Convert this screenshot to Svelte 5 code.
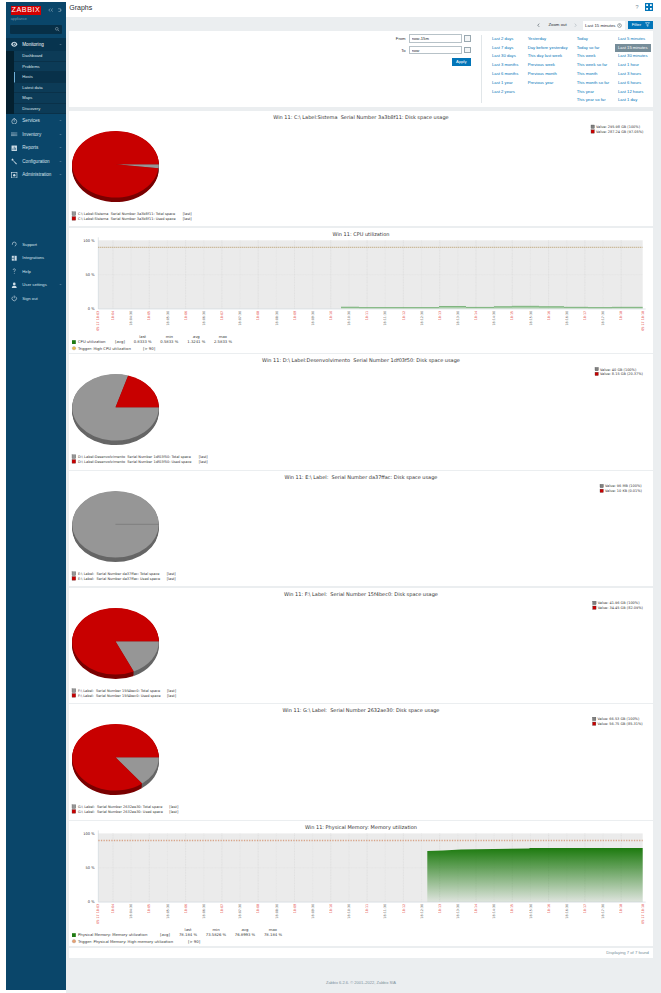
<script>
	// side menu
	const mainNav = [
		{ label: 'Services', icon: 'clock' },
		{ label: 'Inventory', icon: 'list' },
		{ label: 'Reports', icon: 'report' },
		{ label: 'Configuration', icon: 'wrench' },
		{ label: 'Administration', icon: 'admin' }
	];
	const subNav = ['Dashboard', 'Problems', 'Hosts', 'Latest data', 'Maps', 'Discovery'];
	const lowerNav = [
		{ label: 'Support', icon: 'support' },
		{ label: 'Integrations', icon: 'integrations' },
		{ label: 'Help', icon: 'help' },
		{ label: 'User settings', icon: 'user', arrow: true },
		{ label: 'Sign out', icon: 'power' }
	];

	// time selector
	const ranges = [
		['Last 2 days', 'Last 7 days', 'Last 30 days', 'Last 3 months', 'Last 6 months', 'Last 1 year', 'Last 2 years'],
		['Yesterday', 'Day before yesterday', 'This day last week', 'Previous week', 'Previous month', 'Previous year'],
		['Today', 'Today so far', 'This week', 'This week so far', 'This month', 'This month so far', 'This year', 'This year so far'],
		['Last 5 minutes', 'Last 15 minutes', 'Last 30 minutes', 'Last 1 hour', 'Last 3 hours', 'Last 6 hours', 'Last 12 hours', 'Last 1 day']
	];

	// pie graphs, sector angles in degrees from the right, clockwise
	const RED = ['#c80000', '#7a0000'];
	const GRAY = ['#969696', '#666666'];
	const pies = {
		c: {
			title: 'Win 11: C:\\ Label:Sistema  Serial Number 3a3b8f11: Disk space usage',
			name: 'C:\\ Label:Sistema  Serial Number 3a3b8f11:',
			lastX: 113.7,
			sectors: [[0, 7, GRAY], [7, 360, RED]],
			values: ['Value: 295.98 GB (100%)', 'Value: 287.24 GB (97.05%)'],
			valueX: 522,
			valueY: 16
		},
		d: {
			title: 'Win 11: D:\\ Label:Desenvolvimento  Serial Number 1df03f50: Disk space usage',
			name: 'D:\\ Label:Desenvolvimento  Serial Number 1df03f50:',
			lastX: 129.7,
			sectors: [[0, 287, GRAY], [287, 360, RED]],
			values: ['Value: 40 GB (100%)', 'Value: 8.15 GB (20.37%)'],
			valueX: 526,
			valueY: 15.4
		},
		e: {
			title: 'Win 11: E:\\ Label:  Serial Number da37ffac: Disk space usage',
			name: 'E:\\ Label:  Serial Number da37ffac:',
			lastX: 97.7,
			sectors: [[0, 360, GRAY]],
			seam: true,
			values: ['Value: 96 MB (100%)', 'Value: 10 KB (0.01%)'],
			valueX: 531,
			valueY: 15.3
		},
		f: {
			title: 'Win 11: F:\\ Label:  Serial Number 15f4bec0: Disk space usage',
			name: 'F:\\ Label:  Serial Number 15f4bec0:',
			lastX: 98,
			sectors: [[0, 65, GRAY], [65, 360, RED]],
			values: ['Value: 41.96 GB (100%)', 'Value: 34.45 GB (82.09%)'],
			valueX: 523.7,
			valueY: 15.2
		},
		g: {
			title: 'Win 11: G:\\ Label:  Serial Number 2632ae30: Disk space usage',
			name: 'G:\\ Label:  Serial Number 2632ae30:',
			lastX: 100.3,
			sectors: [[0, 52, GRAY], [52, 360, RED]],
			values: ['Value: 66.53 GB (100%)', 'Value: 56.75 GB (85.31%)'],
			valueX: 523.5,
			valueY: 15.2
		}
	};

	const CX = 46.5;
	const CY = 53.3;
	const RX = 43.3;
	const RY = 33.3;
	const depthLayers = [4.5, 3.5, 2.5, 1.5, 0.5];

	function sectorPath(from, to, dy = 0) {
		const y = CY + dy;
		if (to - from >= 360) {
			return `M${CX - RX} ${y}A${RX} ${RY} 0 1 0 ${CX + RX} ${y}A${RX} ${RY} 0 1 0 ${CX - RX} ${y}Z`;
		}
		const a = (from * Math.PI) / 180;
		const b = (to * Math.PI) / 180;
		const large = to - from > 180 ? 1 : 0;
		return `M${CX} ${y}L${CX + RX * Math.cos(a)} ${y + RY * Math.sin(a)}A${RX} ${RY} 0 ${large} 1 ${CX + RX * Math.cos(b)} ${y + RY * Math.sin(b)}Z`;
	}

	// line graphs
	const PLOT_X = 29.3;
	const PLOT_W = 544.4;
	const STEP = 18.15;
	const FIRST = 44;
	const ticks = Array.from({ length: 29 }, (_, i) => {
		const minute = 4 + Math.floor(i / 2);
		const label = `18:${String(minute).padStart(2, '0')}${i % 2 ? ':30' : ''}`;
		return { x: FIRST + i * STEP, label, major: i % 2 === 0 };
	});

	const cpuSteps = [
		[272, 290, 79.2], [290, 370, 79.6], [370, 397, 78.5], [397, 425, 79.4], [425, 443, 78.7],
		[443, 470, 78.3], [470, 495, 78.7], [495, 519, 79.3], [519, 543, 79.6], [543, 573.7, 79.3]
	];
	const memPoints = '358.3,81 358.3,30 374,29.6 392,28.4 460,27.6 461,26.9 573.7,27 573.7,81';
</script>

{#snippet icon(name)}
	<svg class="nav-icon" viewBox="0 0 12 12" aria-hidden="true">
		{#if name === 'eye'}
			<path d="M0 6c2-3.4 4-4.6 6-4.6S10 2.600 12 6c-2 3.400-4 4.600-6 4.600S2 9.400 0 6z" fill="currentColor" />
			<circle cx="6" cy="6" r="2.600" fill="#07344f" />
			<circle cx="6" cy="6" r="1.300" fill="currentColor" />
		{:else if name === 'clock'}
			<circle cx="6" cy="6.500" r="4.500" class="line" />
			<path d="M6 4v2.800M4.500 .8h3" class="line" />
		{:else if name === 'list'}
			<path d="M0 3.500h12M0 6h12M0 8.500h12" class="line dotted" />
		{:else if name === 'report'}
			<rect x="1" y="1" width="10" height="10" fill="currentColor" />
			<path d="M3.500 9V6.500M6 9V3M8.500 9V5" class="line cut" />
		{:else if name === 'wrench'}
			<path d="M1 2.500 3 .8l1.600 1.800-.6 1.600 7 6.200-1.400 1.400-6.400-7-1.600.4z" fill="currentColor" />
		{:else if name === 'admin'}
			<rect x="1" y="1" width="10" height="10" class="line" />
			<circle cx="6" cy="6" r="2.200" fill="currentColor" />
		{:else if name === 'support'}
			<path d="M2.500 7V5.500a3.500 3.500 0 0 1 7 0V7" class="line" />
			<path d="M9.500 7.500 7 9.500" class="line" />
		{:else if name === 'integrations'}
			<rect x="1.500" y="1.500" width="9" height="9" fill="currentColor" />
			<path d="M6 1.500v9M1.500 6h4.500" class="line cut" />
		{:else if name === 'help'}
			<path d="M4 3.500a2 2 0 1 1 3 1.700c-.8.500-1 .9-1 2" class="line" />
			<circle cx="6" cy="9.700" r=".8" fill="currentColor" />
		{:else if name === 'user'}
			<circle cx="6" cy="3.500" r="2.500" fill="currentColor" />
			<path d="M1.500 11c0-3 2-4 4.500-4s4.500 1 4.500 4z" fill="currentColor" />
		{:else if name === 'power'}
			<path d="M6 1v5M3.500 3a4.200 4.200 0 1 0 5 0" class="line" />
		{/if}
	</svg>
{/snippet}

{#snippet chevron()}
	<svg class="chevron" viewBox="0 0 6 6" aria-hidden="true"><path d="M1.500 2.200 3 3.800l1.500-1.600" /></svg>
{/snippet}

{#snippet pieCard(pie)}
	<section class="graph pie-graph">
		<svg class="canvas" viewBox="0 0 583.4 115.500" width="583.4" height="115.5">
			<text class="title" x="292" y="8">{pie.title}</text>
			{#each depthLayers as dy}
				{#each pie.sectors as s}
					<path d={sectorPath(s[0], s[1], dy)} fill={s[2][1]} />
				{/each}
			{/each}
			{#each pie.sectors as s}
				<path d={sectorPath(s[0], s[1])} fill={s[2][0]} />
			{/each}
			{#if pie.seam}
				<path d="M{CX} {CY}H{CX + RX}" class="seam" />
			{/if}

			<rect x="3" y="100.800" width="3.800" height="3.800" fill="#969696" stroke="#555" stroke-width=".3" />
			<rect x="3" y="105.500" width="3.800" height="3.800" fill="#c80000" stroke="#555" stroke-width=".3" />
			<text class="small" x="9" y="104">{pie.name} Total space</text>
			<text class="small" x="9" y="108.700">{pie.name} Used space</text>
			<text class="small" x={pie.lastX} y="104">[last]</text>
			<text class="small" x={pie.lastX} y="108.700">[last]</text>

			<rect x={pie.valueX} y={pie.valueY - 2} width="3.400" height="3.400" fill="#808080" stroke="#444" stroke-width=".3" />
			<rect x={pie.valueX} y={pie.valueY + 2.800} width="3.400" height="3.400" fill="#c80000" stroke="#444" stroke-width=".3" />
			<text class="small" x={pie.valueX + 5} y={pie.valueY + 1.200}>{pie.values[0]}</text>
			<text class="small" x={pie.valueX + 5} y={pie.valueY + 6}>{pie.values[1]}</text>
		</svg>
	</section>
{/snippet}

{#snippet plotFrame(top, triggerY, triggerClass)}
	<rect x={PLOT_X} y={top} width={PLOT_W} height="68.700" fill="#ebebeb" />
	{#each ticks as t}
		<path d="M{t.x} {top}v68.700" class={t.major ? 'grid major' : 'grid'} />
	{/each}
	<path d="M{PLOT_X} {top + 34.350}h{PLOT_W}" class="grid" />
	<path d="M{PLOT_X} {top - 3}V{top + 68.700}H{PLOT_X + PLOT_W + 3}" class="axis" />
	<path d="M{PLOT_X} {triggerY}h{PLOT_W}" class={triggerClass} />
	<text class="ylabel" x="25.600" y={top + 1.300}>100 %</text>
	<text class="ylabel" x="25.600" y={top + 35.600}>50 %</text>
	<text class="ylabel" x="25.600" y={top + 70}>0 %</text>
	{#each ticks as t}
		<text class={t.major ? 'tick red' : 'tick'} transform="translate({t.x + 1.200} {top + 70.500}) rotate(-90)">{t.label}</text>
	{/each}
	<text class="tick red" transform="translate({PLOT_X + 1.200} {top + 70.500}) rotate(-90)">05-17 18:03</text>
	<text class="tick red" transform="translate({PLOT_X + PLOT_W + 1.200} {top + 70.500}) rotate(-90)">05-17 18:18</text>
{/snippet}

{#snippet statRow(cols, heads, vals)}
	{#each cols as x, i}
		<text class="legend mid" {x} y="110.500">{heads[i]}</text>
		<text class="legend mid" {x} y="115.500">{vals[i]}</text>
	{/each}
{/snippet}

<div class="layout">
	<aside class="sidebar">
		<div class="brand">
			<div class="logo">ZABBIX</div>
			<div class="brand-tools">
				<svg viewBox="0 0 8 6" aria-hidden="true"><path d="M3.500 .8 1 3l2.500 2.200M7 .8 4.500 3 7 5.200" /></svg>
				<svg viewBox="0 0 8 6" aria-hidden="true"><path d="M1.500 1h3.500v4H2M5 3h2" /></svg>
			</div>
		</div>
		<div class="appliance">appliance</div>
		<div class="search">
			<svg viewBox="0 0 8 8" aria-hidden="true"><circle cx="3.200" cy="3.200" r="2.400" /><path d="m5 5 2.500 2.500" /></svg>
		</div>

		<nav class="nav">
			<div class="nav-row open">
				{@render icon('eye')}
				<span>Monitoring</span>
				{@render chevron()}
			</div>
			<div class="submenu">
				{#each subNav as item}
					<div class="sub-row" class:current={item === 'Hosts'}>{item}</div>
				{/each}
			</div>
			{#each mainNav as item}
				<div class="nav-row">
					{@render icon(item.icon)}
					<span>{item.label}</span>
					{@render chevron()}
				</div>
			{/each}
		</nav>

		<nav class="nav lower">
			{#each lowerNav as item}
				<div class="nav-row">
					{@render icon(item.icon)}
					<span>{item.label}</span>
					{#if item.arrow}{@render chevron()}{/if}
				</div>
			{/each}
		</nav>
	</aside>

	<main class="main">
		<header class="header">
			<h1>Graphs</h1>
			<div class="header-tools">
				<span class="help-mark">?</span>
				<span class="fullscreen">
					<svg viewBox="0 0 8 8" aria-hidden="true">
						<path d="M1.200 1.200h1.800v1.800H1.200zM5 1.200h1.800v1.800H5zM1.200 5h1.800v1.800H1.200zM5 5h1.800v1.800H5z" />
					</svg>
				</span>
			</div>
		</header>

		<div class="tabbar">
			<svg class="step" viewBox="0 0 4 6" aria-hidden="true"><path d="M3 .8 1 3l2 2.200" /></svg>
			<span class="zoom-out">Zoom out</span>
			<svg class="step faded" viewBox="0 0 4 6" aria-hidden="true"><path d="m1 .8 2 2.200-2 2.200" /></svg>
			<div class="time-tab">
				Last 15 minutes
				<svg viewBox="0 0 8 8" aria-hidden="true"><circle cx="4" cy="4" r="3" /><path d="M4 2.200V4l1.200.8" /></svg>
			</div>
			<div class="filter-btn">
				Filter
				<svg viewBox="0 0 8 8" aria-hidden="true"><path d="M.8 1h6.400L4.800 4v3L3.200 6V4z" /></svg>
			</div>
		</div>

		<section class="filter">
			<div class="form">
				<div class="form-row">
					<label for="from">From</label>
					<input id="from" value="now-15m" />
					<span class="calendar"></span>
				</div>
				<div class="form-row">
					<label for="to">To</label>
					<input id="to" value="now" />
					<span class="calendar"></span>
				</div>
				<button type="button" class="apply">Apply</button>
			</div>
			<div class="ranges">
				{#each ranges as col}
					<div class="range-col">
						{#each col as item}
							<span class="range" class:selected={item === 'Last 15 minutes'}>{item}</span>
						{/each}
					</div>
				{/each}
			</div>
		</section>

		{@render pieCard(pies.c)}

		<section class="graph line-graph">
			<svg class="canvas" viewBox="0 0 583.400 125" width="583.4" height="125">
				<text class="title" x="292" y="8">Win 11: CPU utilization</text>
				{@render plotFrame(12.3, 19.3, 'trigger')}
				{#each cpuSteps as s}
					<rect x={s[0]} y={s[2]} width={s[1] - s[0]} height={80.400 - s[2]} fill="#a9cfa9" />
					<path d="M{s[0]} {s[2]}H{s[1]}" class="cpu-line" />
				{/each}
				{@render statRow([73.7, 100.3, 127.3, 154], ['last', 'min', 'avg', 'max'], ['0.8333 %', '0.5833 %', '1.3241 %', '2.5833 %'])}
				<rect x="3" y="112.200" width="3.800" height="3.800" fill="#1f7a12" />
				<text class="legend" x="9" y="115.500">CPU utilization</text>
				<text class="legend" x="46" y="115.500">[avg]</text>
				<circle cx="5" cy="120.200" r="1.800" fill="#e8b84c" stroke="#999" stroke-width=".3" />
				<text class="legend" x="9" y="121.800">Trigger: High CPU utilization</text>
				<text class="legend" x="74" y="121.800">[&gt; 90]</text>
			</svg>
		</section>

		{@render pieCard(pies.d)}
		{@render pieCard(pies.e)}
		{@render pieCard(pies.f)}
		{@render pieCard(pies.g)}

		<section class="graph line-graph">
			<svg class="canvas" viewBox="0 0 583.400 125" width="583.4" height="125">
				<defs>
					<linearGradient id="mem-fill" x1="0" y1="0" x2="0" y2="1">
						<stop offset="0" stop-color="#1c7a0e" />
						<stop offset="1" stop-color="#1c7a0e" stop-opacity=".06" />
					</linearGradient>
				</defs>
				<text class="title" x="292" y="8">Win 11: Physical Memory: Memory utilization</text>
				{@render plotFrame(12.4, 19.4, 'trigger thick')}
				<polygon points={memPoints} fill="url(#mem-fill)" />
				{@render statRow([119, 147, 176, 204], ['last', 'min', 'avg', 'max'], ['78.184 %', '73.5826 %', '76.8993 %', '78.184 %'])}
				<rect x="3" y="112.200" width="3.800" height="3.800" fill="#1f7a12" />
				<text class="legend" x="9" y="115.500">Physical Memory: Memory utilization</text>
				<text class="legend" x="91" y="115.500">[avg]</text>
				<circle cx="5" cy="120.200" r="1.800" fill="#e8a070" stroke="#999" stroke-width=".3" />
				<text class="legend" x="9" y="121.800">Trigger: Physical Memory: High memory utilization</text>
				<text class="legend" x="119" y="121.800">[&gt; 90]</text>
			</svg>
		</section>

		<div class="paging">Displaying 7 of 7 found</div>

		<footer class="footer">Zabbix 6.2.6. © 2001–2022, Zabbix SIA</footer>
	</main>
</div>

<style>
	:global(body) {
		margin: 0;
		background: #fff;
		overflow: hidden;
	}

	.layout {
		display: flex;
		height: 993px;
		padding-left: 6px;
		box-sizing: border-box;
		font-family: 'Liberation Sans', Arial, sans-serif;
	}

	/* side menu */
	.sidebar {
		flex: 0 0 60px;
		height: 988px;
		margin-top: 2px;
		background: #0a466a;
		color: #d6e2ea;
	}

	.brand {
		display: flex;
		align-items: center;
		justify-content: space-between;
		padding: 4px 3.5px 0 4.7px;
	}

	.logo {
		width: 30.6px;
		height: 8.7px;
		background: #d40000;
		color: #fff;
		font-size: 7.2px;
		line-height: 8.9px;
		text-align: center;
		letter-spacing: 0.55px;
	}

	.brand-tools {
		display: flex;
		gap: 3.5px;
	}

	.brand-tools svg {
		width: 5.5px;
		height: 4.2px;
		fill: none;
		stroke: #9db6c6;
		stroke-width: 0.8;
	}

	.appliance {
		padding: 2px 0 0 4.7px;
		height: 6.500px;
		font-size: 3.800px;
		line-height: 5px;
		color: #6f97ae;
	}

	.search {
		display: flex;
		align-items: center;
		justify-content: flex-end;
		height: 8.700px;
		margin: 1.800px 4px 4px 4px;
		padding-right: 2.500px;
		border-radius: 1px;
		background: #072f47;
	}

	.search svg {
		width: 4.500px;
		height: 4.500px;
		fill: none;
		stroke: #a9bdca;
		stroke-width: 0.9;
	}

	.nav-row {
		display: flex;
		align-items: center;
		height: 13.500px;
		padding-left: 5px;
		font-size: 4.600px;
	}

	.nav-row span {
		flex: 1;
		margin-left: 4.800px;
	}

	.nav-row.open {
		background: #07344f;
		color: #f7fafb;
	}

	.nav-icon {
		flex: none;
		width: 6.500px;
		height: 6.500px;
		color: #cfdde6;
	}

	.nav-icon .line {
		fill: none;
		stroke: currentColor;
		stroke-width: 1.200;
	}

	.nav-icon .dotted {
		stroke-dasharray: 1.500 0.500;
	}

	.nav-icon .cut {
		stroke: #0a466a;
	}

	.chevron {
		flex: none;
		width: 3px;
		height: 3px;
		margin-right: 4px;
		fill: none;
		stroke: #9db6c6;
		stroke-width: 0.900;
	}

	.submenu {
		border-left: 8px solid #04202f;
		background: #0c3b57;
	}

	.sub-row {
		height: 10.500px;
		box-sizing: border-box;
		padding-left: 8.300px;
		border-bottom: 0.500px solid #0a3149;
		font-size: 4.100px;
		line-height: 10px;
		color: #dfe8ee;
	}

	.sub-row.current {
		padding-left: 7.300px;
		border-left: 1px solid #6fb0d8;
		background: #08314a;
	}

	.lower {
		margin-top: 56px;
	}

	.lower .nav-row {
		font-size: 4.200px;
	}

	/* content */
	.main {
		flex: 1;
		display: flex;
		flex-direction: column;
		min-width: 0;
		background: #ebeef0;
	}

	.header {
		flex: none;
		display: flex;
		align-items: center;
		justify-content: space-between;
		height: 17.300px;
		padding: 0 8px 0 3.300px;
		background: #fff;
	}

	h1 {
		margin: 0 0 3px;
		font-size: 7px;
		font-weight: 400;
		color: #1f2c33;
	}

	.header-tools {
		display: flex;
		align-items: center;
		gap: 6.500px;
		margin-bottom: 2.800px;
	}

	.help-mark {
		font-size: 5.500px;
		color: #768d99;
	}

	.fullscreen {
		display: block;
		width: 8px;
		height: 8px;
		background: #0275b8;
	}

	.fullscreen svg {
		display: block;
		fill: #fff;
	}

	.tabbar {
		flex: none;
		display: flex;
		align-items: flex-start;
		justify-content: flex-end;
		height: 13.700px;
		box-sizing: border-box;
		padding: 3.700px 8.300px 0 0;
		font-size: 4.300px;
		color: #1f2c33;
	}

	.step {
		width: 3px;
		height: 4.500px;
		margin-top: 2px;
		fill: none;
		stroke: #45535a;
		stroke-width: 0.800;
	}

	.step.faded {
		stroke: #aab4ba;
	}

	.zoom-out {
		margin: 0 7.500px 0 8px;
		line-height: 8px;
	}

	.time-tab {
		display: flex;
		align-items: center;
		gap: 2px;
		height: 9.300px;
		margin-left: 5.500px;
		padding: 0 2.200px 0 2.500px;
		background: #fff;
	}

	.time-tab svg {
		width: 5px;
		height: 5px;
		fill: none;
		stroke: #45535a;
		stroke-width: 0.800;
	}

	.filter-btn {
		display: flex;
		align-items: center;
		gap: 4px;
		height: 8px;
		margin-left: 3px;
		padding: 0 2.500px 0 4px;
		background: #0275b8;
		color: #fff;
	}

	.filter-btn svg {
		width: 5px;
		height: 5px;
		fill: none;
		stroke: #fff;
		stroke-width: 0.800;
	}

	.filter {
		flex: none;
		display: flex;
		height: 76.300px;
		box-sizing: border-box;
		margin: 0 8.300px 3.700px 3.300px;
		padding-top: 3.300px;
		background: #fff;
		font-size: 4.200px;
	}

	.form {
		display: flex;
		flex-direction: column;
		align-items: flex-end;
		gap: 3.300px;
		width: 411.400px;
		box-sizing: border-box;
		padding-right: 10px;
	}

	.form-row {
		display: flex;
		align-items: center;
		height: 8.400px;
	}

	.form-row label {
		margin-right: 3.300px;
		color: #1f2c33;
	}

	.form-row input {
		width: 53.400px;
		height: 8.400px;
		box-sizing: border-box;
		padding: 0 1.800px;
		border: 0.500px solid #b7c2c8;
		outline: none;
		font: inherit;
		color: #1f2c33;
	}

	.calendar {
		width: 6.400px;
		height: 6.200px;
		margin-left: 2px;
		box-sizing: border-box;
		border: 0.500px solid #99a8b0;
		border-top-width: 1.400px;
		background: #f4f6f7;
	}

	.apply {
		width: 18.700px;
		height: 8px;
		padding: 0;
		border: none;
		background: #0275b8;
		color: #fff;
		font: inherit;
	}

	.ranges {
		display: grid;
		grid-template-columns: 35.700px 49px 41.300px 1fr;
		flex: 1;
		height: 68.500px;
		margin-top: 0.500px;
		padding-left: 10.300px;
		border-left: 0.500px solid #e1e6e9;
	}

	.range-col {
		display: flex;
		flex-direction: column;
		align-items: flex-start;
	}

	.range {
		height: 8.800px;
		line-height: 8.800px;
		color: #0275b8;
		white-space: nowrap;
	}

	.range.selected {
		margin: 0 0 0 -3px;
		padding: 0 3px;
		background: #768d99;
		color: #fff;
		line-height: 7.600px;
		height: 7.600px;
		margin-top: 0.600px;
		margin-bottom: 0.600px;
	}

	.graph {
		flex: none;
		margin: 0 8.300px 1.300px 3.300px;
		background: #fff;
	}

	.pie-graph {
		height: 115.500px;
	}

	.line-graph {
		height: 125px;
	}

	.canvas {
		display: block;
		font-family: 'DejaVu Sans', sans-serif;
	}

	.title {
		font-size: 5px;
		fill: #333;
		text-anchor: middle;
		white-space: pre;
	}

	.small {
		font-size: 3.500px;
		fill: #333;
		white-space: pre;
	}

	.legend {
		font-size: 3.800px;
		fill: #333;
	}

	.legend.mid {
		text-anchor: middle;
	}

	.ylabel {
		font-size: 3.600px;
		fill: #333;
		text-anchor: end;
	}

	.tick {
		font-size: 3.300px;
		fill: #555;
		text-anchor: end;
	}

	.tick.red {
		fill: #e03030;
	}

	.seam {
		fill: none;
		stroke: #666;
		stroke-width: 0.500;
	}

	.grid {
		fill: none;
		stroke: #dedede;
		stroke-width: 0.400;
		stroke-dasharray: 1 0.600;
	}

	.grid.major {
		stroke: #d4d4d4;
		stroke-width: 0.500;
	}

	.axis {
		fill: none;
		stroke: #c3ced6;
		stroke-width: 0.500;
	}

	.trigger {
		fill: none;
		stroke: #a8823f;
		stroke-width: 0.800;
		stroke-dasharray: 1 1;
	}

	.trigger.thick {
		stroke: #d8a488;
		stroke-width: 1.500;
		stroke-dasharray: 1.300 1.300;
	}

	.cpu-line {
		fill: none;
		stroke: #4d9a4d;
		stroke-width: 0.600;
	}

	.paging {
		flex: none;
		height: 10px;
		margin: 0.400px 8.300px 0 3.300px;
		padding-right: 3.800px;
		background: #fff;
		font-size: 4.200px;
		line-height: 10px;
		text-align: right;
		color: #768d99;
	}

	.footer {
		margin-top: auto;
		padding: 0 5px 8.500px 0;
		font-size: 4px;
		line-height: 5px;
		text-align: center;
		color: #7d909b;
	}
</style>
